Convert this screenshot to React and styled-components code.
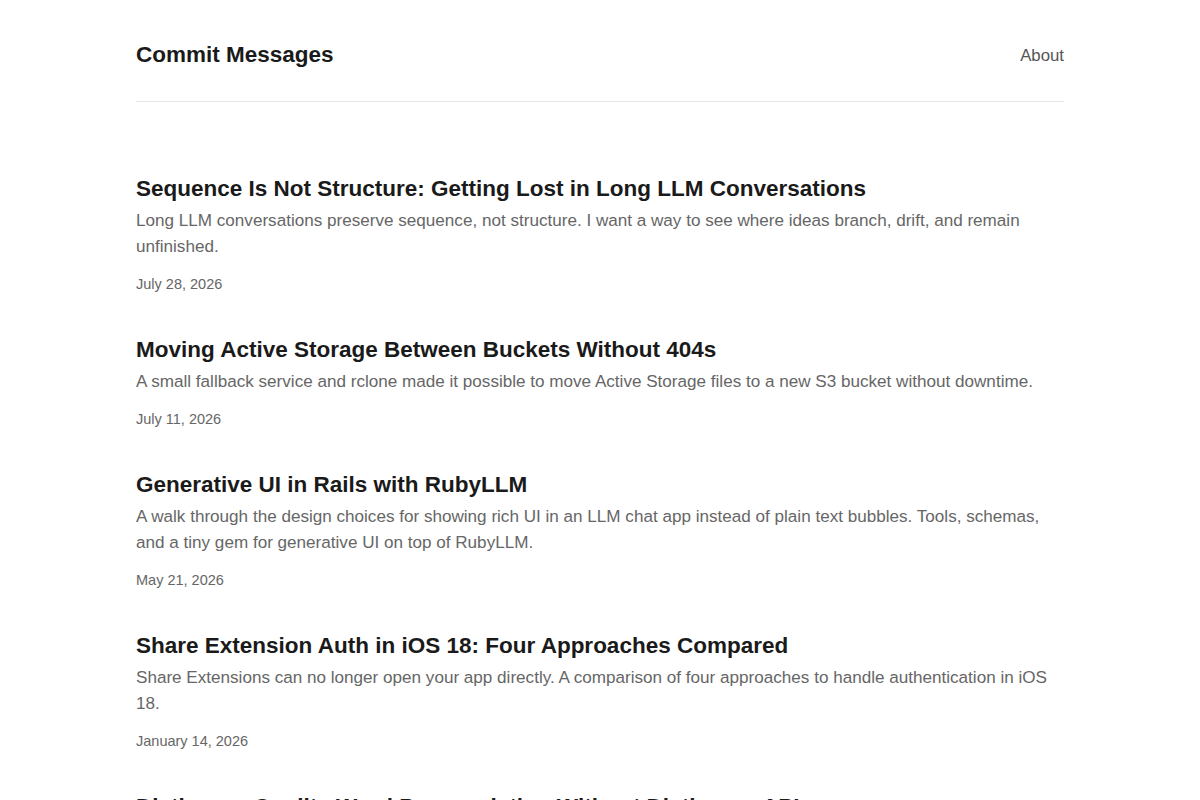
import React from "react";
import styled, { createGlobalStyle } from "styled-components";

const Global = createGlobalStyle`
  * { box-sizing: border-box; }
  html, body { margin: 0; padding: 0; background: #fff; }
  body { font-family: "Liberation Sans", Arial, sans-serif; color: #1a1a1a; }
`;

const Page = styled.div`
  max-width: 928px;
  margin: 0 auto;
`;

const Header = styled.header`
  display: flex;
  align-items: center;
  justify-content: space-between;
  padding: 41px 0 32px;
  border-bottom: 1px solid #e5e5e5;
`;

const SiteTitle = styled.a`
  font-size: 22.5px;
  line-height: 28px;
  font-weight: 700;
  color: #1a1a1a;
  text-decoration: none;
`;

const NavLink = styled.a`
  padding-top: 2px;
  font-size: 16.8px;
  line-height: 26px;
  color: #555;
  text-decoration: none;
`;

const Main = styled.main`
  padding-top: 73px;
  display: flex;
  flex-direction: column;
  gap: 42px;
`;

const Post = styled.article`
  display: flex;
  flex-direction: column;
`;

const PostTitle = styled.h2`
  margin: 0;
  font-size: 22.5px;
  line-height: 28px;
  font-weight: 700;
  color: #1a1a1a;
`;

const Summary = styled.p`
  margin: 5px 0 0;
  font-size: 17.1px;
  line-height: 26px;
  color: #666;
`;

const DateLine = styled.time`
  margin-top: 14px;
  font-size: 14.5px;
  line-height: 20px;
  color: #666;
`;

const posts = [
  {
    title: "Sequence Is Not Structure: Getting Lost in Long LLM Conversations",
    summary:
      "Long LLM conversations preserve sequence, not structure. I want a way to see where ideas branch, drift, and remain unfinished.",
    date: "July 28, 2026",
  },
  {
    title: "Moving Active Storage Between Buckets Without 404s",
    summary:
      "A small fallback service and rclone made it possible to move Active Storage files to a new S3 bucket without downtime.",
    date: "July 11, 2026",
  },
  {
    title: "Generative UI in Rails with RubyLLM",
    summary:
      "A walk through the design choices for showing rich UI in an LLM chat app instead of plain text bubbles. Tools, schemas, and a tiny gem for generative UI on top of RubyLLM.",
    date: "May 21, 2026",
  },
  {
    title: "Share Extension Auth in iOS 18: Four Approaches Compared",
    summary:
      "Share Extensions can no longer open your app directly. A comparison of four approaches to handle authentication in iOS 18.",
    date: "January 14, 2026",
  },
  {
    title: "Dictionary-Quality Word Pronunciation Without Dictionary APIs",
    summary:
      "How to get reliable, dictionary-quality pronunciations for words without depending on a dictionary API.",
    date: "December 2, 2025",
  },
];

export default function App() {
  return (
    <>
      <Global />
      <Page>
        <Header>
          <SiteTitle href="#">Commit Messages</SiteTitle>
          <NavLink href="#">About</NavLink>
        </Header>
        <Main>
          {posts.map((p) => (
            <Post key={p.title}>
              <PostTitle>{p.title}</PostTitle>
              <Summary>{p.summary}</Summary>
              <DateLine>{p.date}</DateLine>
            </Post>
          ))}
        </Main>
      </Page>
    </>
  );
}
